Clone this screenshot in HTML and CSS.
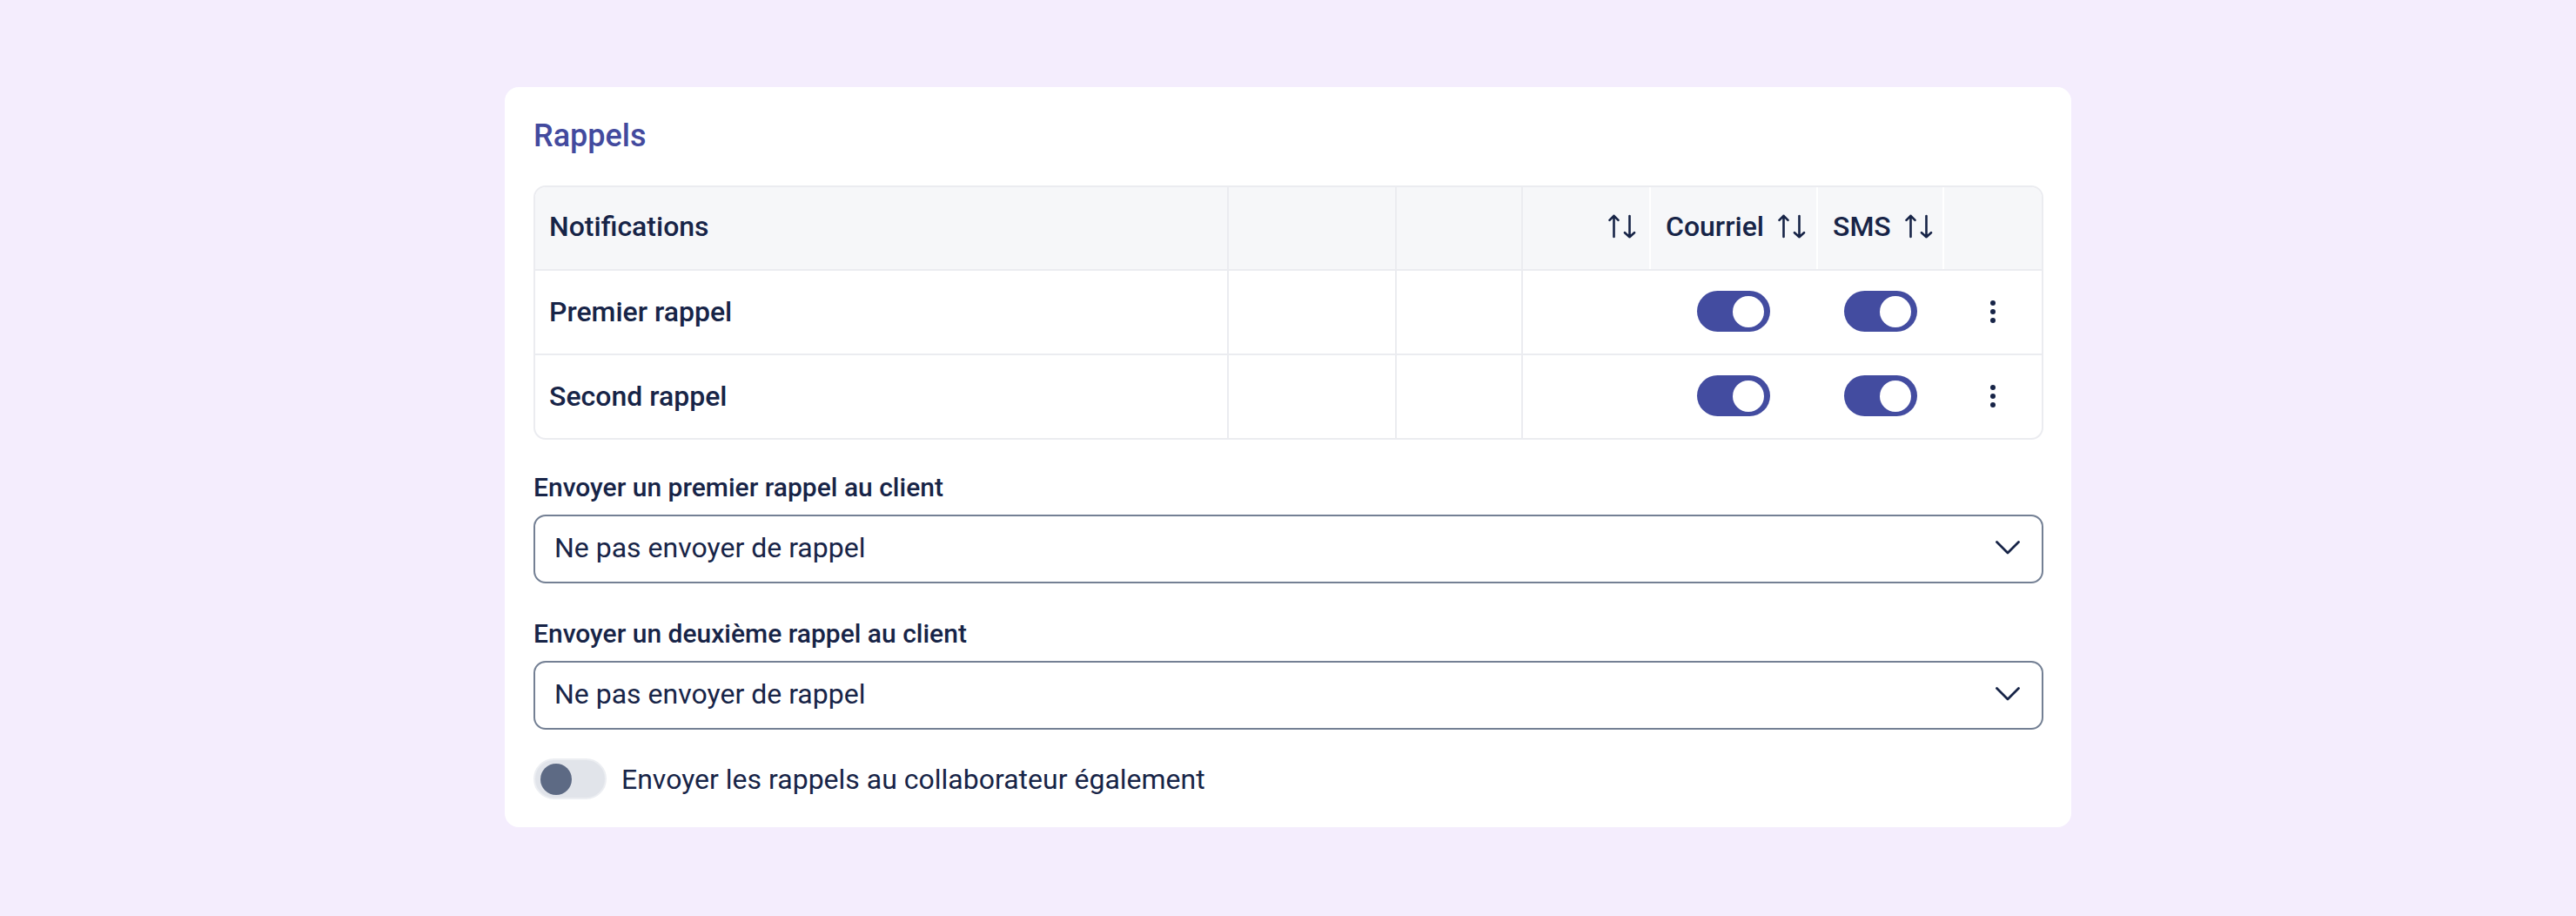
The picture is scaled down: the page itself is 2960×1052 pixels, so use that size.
FILE: index.html
```html
<!DOCTYPE html>
<html lang="fr">
<head>
<meta charset="utf-8">
<title>Rappels</title>
<link rel="stylesheet" href="styles.css">
</head>
<body>
<main class="card">
  <h2 class="title">Rappels</h2>

  <div class="table">
    <div class="row head">
      <div class="cell c1">Notifications</div>
      <div class="cell c2"></div>
      <div class="cell c3"></div>
      <div class="cell c4 right">
        <svg class="sort" viewBox="0 0 30 28" aria-hidden="true"><path d="M4.5 26V1.8M-0.5 6.8L4.5 1.8L9.5 6.8M22.5 2V26.2M17 21.2L22.5 26.2L28 21.2"/></svg>
      </div>
      <div class="cell c5">Courriel
        <svg class="sort" viewBox="0 0 30 28" aria-hidden="true"><path d="M4.5 26V1.8M-0.5 6.8L4.5 1.8L9.5 6.8M22.5 2V26.2M17 21.2L22.5 26.2L28 21.2"/></svg>
      </div>
      <div class="cell c6">SMS
        <svg class="sort" viewBox="0 0 30 28" aria-hidden="true"><path d="M4.5 26V1.8M-0.5 6.8L4.5 1.8L9.5 6.8M22.5 2V26.2M17 21.2L22.5 26.2L28 21.2"/></svg>
      </div>
      <div class="cell c7"></div>
    </div>

    <div class="row">
      <div class="cell c1">Premier rappel</div>
      <div class="cell c2"></div>
      <div class="cell c3"></div>
      <div class="cell c4"></div>
      <div class="cell c5 center"><span class="switch on"><span class="knob"></span></span></div>
      <div class="cell c6 center"><span class="switch on"><span class="knob"></span></span></div>
      <div class="cell c7 center">
        <svg class="kebab" viewBox="0 0 6 26" aria-hidden="true"><circle cx="3" cy="3" r="3"/><circle cx="3" cy="13" r="3"/><circle cx="3" cy="23" r="3"/></svg>
      </div>
    </div>

    <div class="row last">
      <div class="cell c1">Second rappel</div>
      <div class="cell c2"></div>
      <div class="cell c3"></div>
      <div class="cell c4"></div>
      <div class="cell c5 center"><span class="switch on"><span class="knob"></span></span></div>
      <div class="cell c6 center"><span class="switch on"><span class="knob"></span></span></div>
      <div class="cell c7 center">
        <svg class="kebab" viewBox="0 0 6 26" aria-hidden="true"><circle cx="3" cy="3" r="3"/><circle cx="3" cy="13" r="3"/><circle cx="3" cy="23" r="3"/></svg>
      </div>
    </div>
  </div>

  <div class="field">
    <label class="label">Envoyer un premier rappel au client</label>
    <div class="select">
      <span>Ne pas envoyer de rappel</span>
      <svg class="chev" viewBox="0 0 28 16" aria-hidden="true"><path d="M1.5 1.5L14 14L26.5 1.5"/></svg>
    </div>
  </div>

  <div class="field">
    <label class="label">Envoyer un deuxième rappel au client</label>
    <div class="select">
      <span>Ne pas envoyer de rappel</span>
      <svg class="chev" viewBox="0 0 28 16" aria-hidden="true"><path d="M1.5 1.5L14 14L26.5 1.5"/></svg>
    </div>
  </div>

  <div class="switch-row">
    <span class="switch off"><span class="knob"></span></span>
    <span class="switch-label">Envoyer les rappels au collaborateur également</span>
  </div>
</main>
</body>
</html>
```

FILE: styles.css
```css
* { box-sizing: border-box; }

html, body {
  margin: 0;
  padding: 0;
}

body {
  background: #f4edfd;
  font-family: Roboto, "Liberation Sans", Arial, sans-serif;
  color: #172447;
  min-height: 100vh;
  display: flex;
  justify-content: center;
  align-items: flex-start;
  padding-top: 100px;
}

.card {
  width: 1800px;
  height: 850px;
  background: #ffffff;
  border-radius: 16px;
  padding: 32px 32px 0 33px;
}

.title {
  margin: 0 0 33px 0;
  font-size: 36px;
  line-height: 48px;
  font-weight: 500;
  color: #434a9e;
}

.table {
  border: 2px solid #ebecf0;
  border-radius: 14px;
  overflow: hidden;
}

.row {
  display: grid;
  grid-template-columns: 797px 193px 145px 147px 192px 145px 1fr;
  height: 97px;
  border-bottom: 2px solid #ebecf0;
}

.row.last { border-bottom: 0; height: 95px; }

.row.head {
  background: #f6f7f9;
  height: 96px;
}

.cell {
  display: flex;
  align-items: center;
  padding: 0 16px;
  font-size: 32px;
  font-weight: 500;
  border-right: 2px solid #ebecf0;
  gap: 18px;
}

.row.head .cell { padding-bottom: 4px; }
.row:not(.head) .cell { padding-bottom: 2px; }

.cell.c4, .cell.c5, .cell.c6 { border-right-color: #ffffff; }
.cell.c7 { border-right: 0; }

.cell.right { justify-content: flex-end; padding-right: 15px; }
.cell.center { justify-content: center; padding-left: 0; padding-right: 0; }
.cell.c5:not(.center), .cell.c6:not(.center) { padding-left: 17px; }

.sort {
  width: 30px;
  height: 28px;
  fill: none;
  stroke: #172447;
  stroke-width: 2.6;
  stroke-linecap: round;
  stroke-linejoin: round;
  overflow: visible;
  flex: none;
}

.kebab {
  width: 6px;
  height: 26px;
  fill: #172447;
}

.switch {
  display: inline-flex;
  align-items: center;
  width: 84px;
  height: 47px;
  border-radius: 24px;
  padding: 0 6px;
  flex: none;
}

.switch .knob {
  width: 36px;
  height: 36px;
  border-radius: 50%;
}

.switch.on {
  background: #434ca0;
  justify-content: flex-end;
  padding-right: 7px;
}

.switch.on .knob { background: #ffffff; }

.switch.off {
  background: #e1e4ea;
  border: 2px solid #eceef2;
  justify-content: flex-start;
  padding-left: 6px;
}

.switch.off .knob { background: #5d6a84; }

.field {
  display: flex;
  flex-direction: column;
  margin-top: 33px;
}

.field + .field { margin-top: 36px; }

.label {
  font-size: 30px;
  line-height: 44px;
  font-weight: 500;
  margin-bottom: 9px;
}

.select {
  height: 79px;
  border: 2px solid #748094;
  border-radius: 14px;
  display: flex;
  align-items: center;
  justify-content: space-between;
  padding: 0 25px 3px 22px;
  font-size: 32px;
  font-weight: 400;
}

.chev {
  width: 28px;
  height: 16px;
  fill: none;
  stroke: #172447;
  stroke-width: 2.8;
  stroke-linecap: round;
  stroke-linejoin: round;
}

.switch-row {
  display: flex;
  align-items: center;
  gap: 17px;
  margin-top: 33px;
}

.switch-label {
  font-size: 32px;
  font-weight: 400;
}
```
